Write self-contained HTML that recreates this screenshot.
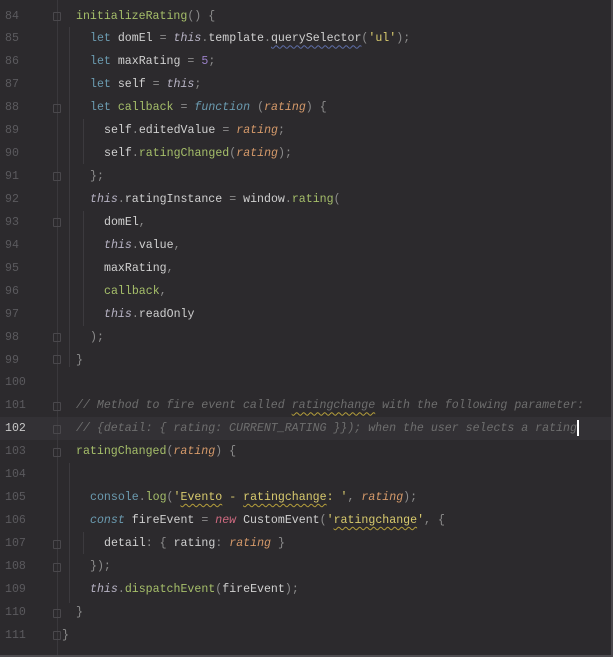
<!DOCTYPE html>
<html><head><meta charset="utf-8"><style>
html,body{margin:0;padding:0}
body{width:613px;height:657px;background:#2c2a2d;position:relative;overflow:hidden;font-family:"Liberation Mono",monospace;font-size:11.6px;color:#d0d0d0}
.ln{position:absolute;left:5px;width:40px;color:#5b5a5e;height:23px;line-height:23px;font-size:11.6px}
.c{position:absolute;height:23px;line-height:23px;white-space:pre}
.k{color:#6b9bb0}.p{color:#8c8c8c}.t{color:#b7b3c4;font-style:italic}.n{color:#9a80c8}
.a{color:#d69a6a;font-style:italic}.s{color:#d9cb6e}.m{color:#a6bf6a}.cm{color:#6e6e6e;font-style:italic}
.f{color:#6b9bb0;font-style:italic}.nw{color:#cf6a80;font-style:italic}
.w{text-decoration:underline wavy #b59f3b;text-decoration-thickness:1px;text-underline-offset:3px}
.wb{text-decoration:underline wavy #5e6ea8;text-decoration-thickness:1px;text-underline-offset:3px}
.g{position:absolute;width:1px;background:#3c3a3e}
.fold{position:absolute;left:53px;width:8px;height:9px;border:1px solid #4a484c;border-radius:1px;box-sizing:border-box}
</style></head><body>
<div style="position:absolute;left:0;right:0;top:417px;height:23px;background:#333135"></div>
<div class="g" style="left:57px;top:0;height:657px;background:#3a383c"></div>
<div class="g" style="left:69px;top:27px;height:340px"></div>
<div class="g" style="left:83px;top:119px;height:45px"></div>
<div class="g" style="left:83px;top:211px;height:115px"></div>
<div class="g" style="left:69px;top:463px;height:140px"></div>
<div class="g" style="left:83px;top:532px;height:22px"></div>
<div class="g" style="right:0;top:0;height:657px;width:2px;background:#4a484c"></div>
<div style="position:absolute;left:0;right:0;bottom:0;height:2px;background:#4e4c50"></div>
<div class="fold" style="top:12px"></div><div class="fold" style="top:104px"></div><div class="fold" style="top:172px"></div>
<div class="fold" style="top:218px"></div><div class="fold" style="top:333px"></div><div class="fold" style="top:355px"></div>
<div class="fold" style="top:402px"></div><div class="fold" style="top:425px"></div><div class="fold" style="top:448px"></div>
<div class="fold" style="top:540px"></div><div class="fold" style="top:563px"></div><div class="fold" style="top:609px"></div><div class="fold" style="top:631px"></div>

<div class="ln" style="top:4.5px">84</div><div class="c" style="top:4.5px;left:76px"><span class="m">initializeRating</span><span class="p">() {</span></div>
<div class="ln" style="top:27.4px">85</div><div class="c" style="top:27.4px;left:90px"><span class="k">let</span> domEl <span class="p">=</span> <span class="t">this</span><span class="p">.</span>template<span class="p">.</span><span class="wb">querySelector</span><span class="p">(</span><span class="s">'ul'</span><span class="p">);</span></div>
<div class="ln" style="top:50.4px">86</div><div class="c" style="top:50.4px;left:90px"><span class="k">let</span> maxRating <span class="p">=</span> <span class="n">5</span><span class="p">;</span></div>
<div class="ln" style="top:73.3px">87</div><div class="c" style="top:73.3px;left:90px"><span class="k">let</span> self <span class="p">=</span> <span class="t">this</span><span class="p">;</span></div>
<div class="ln" style="top:96.2px">88</div><div class="c" style="top:96.2px;left:90px"><span class="k">let</span> <span class="m">callback</span> <span class="p">=</span> <span class="f">function</span> <span class="p">(</span><span class="a">rating</span><span class="p">) {</span></div>
<div class="ln" style="top:119.2px">89</div><div class="c" style="top:119.2px;left:104px">self<span class="p">.</span>editedValue <span class="p">=</span> <span class="a">rating</span><span class="p">;</span></div>
<div class="ln" style="top:142.1px">90</div><div class="c" style="top:142.1px;left:104px">self<span class="p">.</span><span class="m">ratingChanged</span><span class="p">(</span><span class="a">rating</span><span class="p">);</span></div>
<div class="ln" style="top:165px">91</div><div class="c" style="top:165px;left:90px"><span class="p">};</span></div>
<div class="ln" style="top:188px">92</div><div class="c" style="top:188px;left:90px"><span class="t">this</span><span class="p">.</span>ratingInstance <span class="p">=</span> window<span class="p">.</span><span class="m">rating</span><span class="p">(</span></div>
<div class="ln" style="top:210.9px">93</div><div class="c" style="top:210.9px;left:104px">domEl<span class="p">,</span></div>
<div class="ln" style="top:233.8px">94</div><div class="c" style="top:233.8px;left:104px"><span class="t">this</span><span class="p">.</span>value<span class="p">,</span></div>
<div class="ln" style="top:256.8px">95</div><div class="c" style="top:256.8px;left:104px">maxRating<span class="p">,</span></div>
<div class="ln" style="top:279.7px">96</div><div class="c" style="top:279.7px;left:104px"><span class="m">callback</span><span class="p">,</span></div>
<div class="ln" style="top:302.6px">97</div><div class="c" style="top:302.6px;left:104px"><span class="t">this</span><span class="p">.</span>readOnly</div>
<div class="ln" style="top:325.6px">98</div><div class="c" style="top:325.6px;left:90px"><span class="p">);</span></div>
<div class="ln" style="top:348.5px">99</div><div class="c" style="top:348.5px;left:76px"><span class="p">}</span></div>
<div class="ln" style="top:371.4px">100</div>
<div class="ln" style="top:394.4px">101</div><div class="c cm" style="top:394.4px;left:76px">// Method to fire event called <span class="w">ratingchange</span> with the following parameter:</div>
<div class="ln" style="top:417.3px;color:#c8c8c8">102</div><div class="c cm" style="top:417.3px;left:76px">// {detail: { rating: CURRENT_RATING }}); when the user selects a rating<span style="display:inline-block;width:2px;height:16px;background:#fff;vertical-align:middle"></span></div>
<div class="ln" style="top:440.2px">103</div><div class="c" style="top:440.2px;left:76px"><span class="m">ratingChanged</span><span class="p">(</span><span class="a">rating</span><span class="p">) {</span></div>
<div class="ln" style="top:463.2px">104</div>
<div class="ln" style="top:486.1px">105</div><div class="c" style="top:486.1px;left:90px"><span class="k">console</span><span class="p">.</span><span class="m">log</span><span class="p">(</span><span class="s">'<span class="w">Evento</span> - <span class="w">ratingchange</span>: '</span><span class="p">,</span> <span class="a">rating</span><span class="p">);</span></div>
<div class="ln" style="top:509px">106</div><div class="c" style="top:509px;left:90px"><span class="f">const</span> fireEvent <span class="p">=</span> <span class="nw">new</span> CustomEvent<span class="p">(</span><span class="s">'<span class="w">ratingchange</span>'</span><span class="p">, {</span></div>
<div class="ln" style="top:532px">107</div><div class="c" style="top:532px;left:104px">detail<span class="p">: {</span> rating<span class="p">:</span> <span class="a">rating</span> <span class="p">}</span></div>
<div class="ln" style="top:554.9px">108</div><div class="c" style="top:554.9px;left:90px"><span class="p">});</span></div>
<div class="ln" style="top:577.8px">109</div><div class="c" style="top:577.8px;left:90px"><span class="t">this</span><span class="p">.</span><span class="m">dispatchEvent</span><span class="p">(</span>fireEvent<span class="p">);</span></div>
<div class="ln" style="top:600.8px">110</div><div class="c" style="top:600.8px;left:76px"><span class="p">}</span></div>
<div class="ln" style="top:623.7px">111</div><div class="c" style="top:623.7px;left:62px"><span class="p">}</span></div>
</body></html>
